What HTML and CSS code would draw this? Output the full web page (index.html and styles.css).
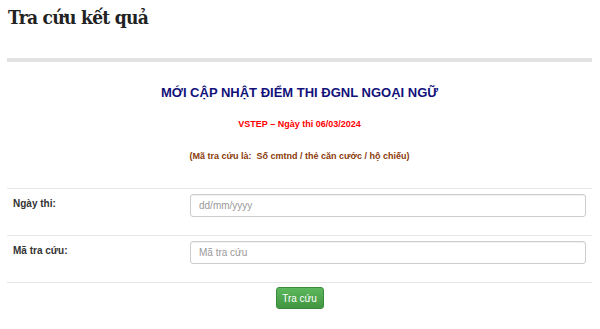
FILE: index.html
```
<!DOCTYPE html>
<html lang="vi">
<head>
<meta charset="utf-8">
<link rel="stylesheet" href="styles.css">
</head>
<body>
<div class="page">
  <h1 class="title">Tra cứu kết quả</h1>
  <div class="bar"></div>
  <div class="notice">
    <p class="head">MỚI CẬP NHẬT ĐIỂM THI ĐGNL NGOẠI NGỮ</p>
    <p class="date">VSTEP – Ngày thi 06/03/2024</p>
    <p class="hint">(Mã tra cứu là:&nbsp; Số cmtnd / thẻ căn cước / hộ chiếu)</p>
  </div>
  <form class="form">
    <div class="row">
      <label class="label">Ngày thi:</label>
      <input class="input" type="text" placeholder="dd/mm/yyyy">
    </div>
    <div class="row">
      <label class="label">Mã tra cứu:</label>
      <input class="input" type="text" placeholder="Mã tra cứu">
    </div>
    <div class="actions">
      <button class="btn" type="button">Tra cứu</button>
    </div>
  </form>
</div>
</body>
</html>
```
FILE: styles.css
```
* { box-sizing: border-box; }
body {
  margin: 0;
  background: #fff;
  font-family: "Liberation Sans", Arial, sans-serif;
}
.page {
  padding: 0 8px 0 7px;
}
.title {
  margin: 0;
  padding: 6px 0 0 1px;
  height: 58px;
  font-family: "DejaVu Serif", serif;
  font-stretch: condensed;
  font-weight: bold;
  font-size: 19px;
  letter-spacing: -0.7px;
  color: #222;
}
.bar {
  height: 4px;
  background: #e2e2e2;
}
.notice {
  text-align: center;
  padding: 23px 0 0;
  height: 127px;
  border-bottom: 1px solid #e6e6e6;
}
.notice p { margin: 0; font-weight: bold; }
.head {
  font-size: 13px;
  color: #12127a;
  line-height: 16px;
}
.date {
  margin-top: 17px !important;
  font-size: 9px;
  color: #f00;
  line-height: 12px;
}
.hint {
  margin-top: 20px !important;
  font-size: 9px;
  color: #8b3a0a;
  line-height: 12px;
}
.row {
  display: grid;
  grid-template-columns: 177px 1fr;
  height: 47px;
  padding: 5px 6px 0 6px;
  border-bottom: 1px solid #e6e6e6;
}
.label {
  font-size: 10px;
  font-weight: bold;
  color: #333;
  padding-top: 4px;
}
.input {
  height: 23px;
  border: 1px solid #ccc;
  border-radius: 3px;
  padding: 0 8px;
  font-family: "Liberation Sans", Arial, sans-serif;
  font-size: 10px;
  color: #555;
  box-shadow: inset 0 1px 1px rgba(0,0,0,.06);
}
.input::placeholder { color: #999; }
.actions {
  display: flex;
  justify-content: center;
  padding-top: 4px;
}
.btn {
  width: 48px;
  height: 22px;
  border: 1px solid #3b8a3b;
  border-radius: 3px;
  background: linear-gradient(#5cb85c, #419641);
  color: #fff;
  font-family: "Liberation Sans", Arial, sans-serif;
  font-size: 10px;
  padding: 0;
}
```
